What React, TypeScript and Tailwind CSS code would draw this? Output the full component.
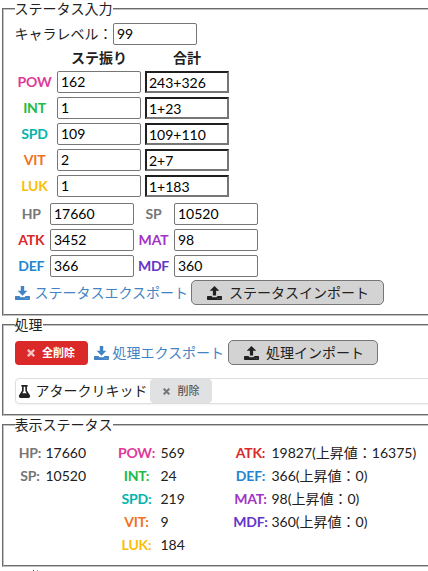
import type { ReactNode } from "react";
import { FaFlask, FaTimes } from "react-icons/fa";

function Panel({ title, size, children }: { title: string; size: string; children: ReactNode }) {
  return (
    <fieldset className={`mx-0.5 w-[600px] border-2 [border-style:groove] border-[#c0c0c0] px-[10.5px] ${size}`}>
      <legend className="h-[18px] leading-[18px]">{title}</legend>
      {children}
    </fieldset>
  );
}

function TrayIcon({ up = false, className }: { up?: boolean; className: string }) {
  return (
    <svg viewBox="0 0 15 14" fill="currentColor" className={`h-[14px] w-[15px] shrink-0 ${className}`}>
      <path d={up ? "M7.5 0 L12.3 4.8 H9.1 V9.6 H5.9 V4.8 H2.7 Z" : "M5.8 0 H9.2 V4.8 H12.3 L7.5 9.7 L2.7 4.8 H5.8 Z"} />
      <path d="M.7 10 H4.4 L5.6 11.3 H9.4 L10.6 10 H14.3 Q15 10 15 10.7 V13.3 Q15 14 14.3 14 H.7 Q0 14 0 13.3 V10.7 Q0 10 .7 10 Z M10.6 12.2 V12.8 H11.2 V12.2 Z M12.6 12.2 V12.8 H13.2 V12.2 Z" fillRule="evenodd" />
    </svg>
  );
}

function Field({ value, readOnly = false }: { value: string; readOnly?: boolean }) {
  return (
    <input
      defaultValue={value}
      readOnly={readOnly}
      className={
        readOnly
          ? "block h-[22px] w-[84px] border-2 border-t-[#202020] border-l-[#202020] border-r-[#767676] border-b-[#767676] bg-white px-0.5 text-black"
          : "block h-[22px] w-[84px] rounded-[2px] border border-[#767676] bg-white px-[3px] pb-px text-black"
      }
    />
  );
}

const stats = [
  ["POW", "text-[#e03997]", "162", "243+326"],
  ["INT", "text-[#21ba45]", "1", "1+23"],
  ["SPD", "text-[#00b5ad]", "109", "109+110"],
  ["VIT", "text-[#f2711c]", "2", "2+7"],
  ["LUK", "text-[#fbbd08]", "1", "1+183"],
];

const derived = [
  ["HP", "text-[#767676]", "17660", "SP", "text-[#767676]", "10520"],
  ["ATK", "text-[#db2828]", "3452", "MAT", "text-[#a333c8]", "98"],
  ["DEF", "text-[#2185d0]", "366", "MDF", "text-[#6435c9]", "360"],
];

const results = [
  {
    box: "w-[88px]",
    label: "w-[31px]",
    rows: [
      ["HP:", "text-[#767676]", "17660"],
      ["SP:", "text-[#767676]", "10520"],
    ],
  },
  {
    box: "ml-[12px] w-[100px]",
    label: "mr-[2px] w-[44px]",
    rows: [
      ["POW:", "text-[#e03997]", "569"],
      ["INT:", "text-[#21ba45]", "24"],
      ["SPD:", "text-[#00b5ad]", "219"],
      ["VIT:", "text-[#f2711c]", "9"],
      ["LUK:", "text-[#fbbd08]", "184"],
    ],
  },
  {
    box: "ml-[17px] w-[210px]",
    label: "mr-[2px] w-[38px]",
    rows: [
      ["ATK:", "text-[#db2828]", "19827(上昇値：16375)"],
      ["DEF:", "text-[#2185d0]", "366(上昇値：0)"],
      ["MAT:", "text-[#a333c8]", "98(上昇値：0)"],
      ["MDF:", "text-[#6435c9]", "360(上昇値：0)"],
    ],
  },
];

export default function App() {
  return (
    <div className="h-[571px] w-[428px] overflow-hidden bg-white font-['Lato','Noto_Sans_CJK_JP',sans-serif] text-[14px] leading-[18px] whitespace-nowrap text-[#212121]">
      <Panel title="ステータス入力" size="h-[316px]">
        <div className="mt-[5px] flex h-[22px] items-center">
          <span className="w-[98.5px]">キャラレベル：</span>
          <Field value="99" />
        </div>
        <div className="mt-[3px] flex h-[20px] items-center text-center font-bold">
          <span className="ml-[42.5px] w-[84px]">ステ振り</span>
          <span className="ml-1 w-[84px]">合計</span>
        </div>
        <div className="mt-[3px] flex flex-col gap-1">
          {stats.map(([name, color, base, total]) => (
            <div key={name} className="flex h-[22px] items-center">
              <b className={`mr-[2.5px] w-10 text-center tracking-[-0.2px] ${color}`}>{name}</b>
              <Field value={base} />
              <span className="w-1" />
              <Field value={total} readOnly />
            </div>
          ))}
        </div>
        <div className="mt-1.5 flex flex-col gap-1">
          {derived.map(([a, ac, av, b, bc, bv]) => (
            <div key={a} className="flex h-[22px] items-center">
              <b className={`w-[35.5px] pr-[2px] text-center tracking-[-0.2px] ${ac}`}>{a}</b>
              <Field value={av} />
              <b className={`w-10 pr-px text-center tracking-[-0.2px] ${bc}`}>{b}</b>
              <Field value={bv} />
            </div>
          ))}
        </div>
        <div className="mt-[3px] flex h-[25px] items-center">
          <a className="flex w-[176.5px] items-center text-[#4183c4]">
            <TrayIcon className="mr-[5px]" />
            ステータスエクスポート
          </a>
          <button className="flex h-[25px] w-[193px] items-center rounded-[5px] border border-[#767676] bg-[#d3d3d3] pl-[15px]">
            <TrayIcon up className="mr-[7px]" />
            ステータスインポート
          </button>
        </div>
      </Panel>

      <Panel title="処理" size="h-[100px]">
        <div className="mt-[6px] flex h-[25px] items-center">
          <button className="flex h-[24px] w-[73px] items-center rounded-[4px] bg-[#db2828] pl-[11px] text-[11px] font-bold text-white">
            <FaTimes className="mr-[6.5px] size-[10px] stroke-current stroke-[40px] opacity-75" />
            全削除
          </button>
          <a className="ml-[6px] flex w-[134.5px] items-center text-[#4183c4]">
            <TrayIcon className="mr-[4px]" />
            処理エクスポート
          </a>
          <button className="flex h-[25px] w-[150px] items-center rounded-[5px] border border-[#767676] bg-[#d3d3d3] pl-[15px]">
            <TrayIcon up className="mr-[7px]" />
            処理インポート
          </button>
        </div>
        <div className="mt-[13px] flex h-[26px] items-center rounded-[4px] border border-[#dededf] pl-[2px] shadow-xs">
          <FaFlask className="mr-[5px] size-[13px]" />
          <span className="w-[114px]">アタークリキッド</span>
          <button className="flex h-[24px] w-[62px] items-center rounded-[4px] bg-[#e0e1e2] pl-[12px] text-[11px] font-medium text-[#5a5a5a]">
            <FaTimes className="mr-[7px] size-[9px] stroke-current stroke-[30px] opacity-80" />
            削除
          </button>
        </div>
      </Panel>

      <Panel title="表示ステータス" size="h-[151px]">
        <div className="mt-[7px] flex items-start">
          {results.map(({ box, label, rows }) => (
            <div key={label} className={box}>
              {rows.map(([name, color, value]) => (
                <div key={name} className="flex h-[23px] items-center">
                  <b className={`text-center tracking-[-0.2px] ${label} ${color}`}>{name}</b>
                  <span>{value}</span>
                </div>
              ))}
            </div>
          ))}
        </div>
      </Panel>
      <div className="ml-[33px] flex gap-[3px] pt-[3px]">
        <span className="h-px w-px bg-[#4a3a78]" />
        <span className="h-px w-px bg-[#d29a31]" />
      </div>
    </div>
  );
}
